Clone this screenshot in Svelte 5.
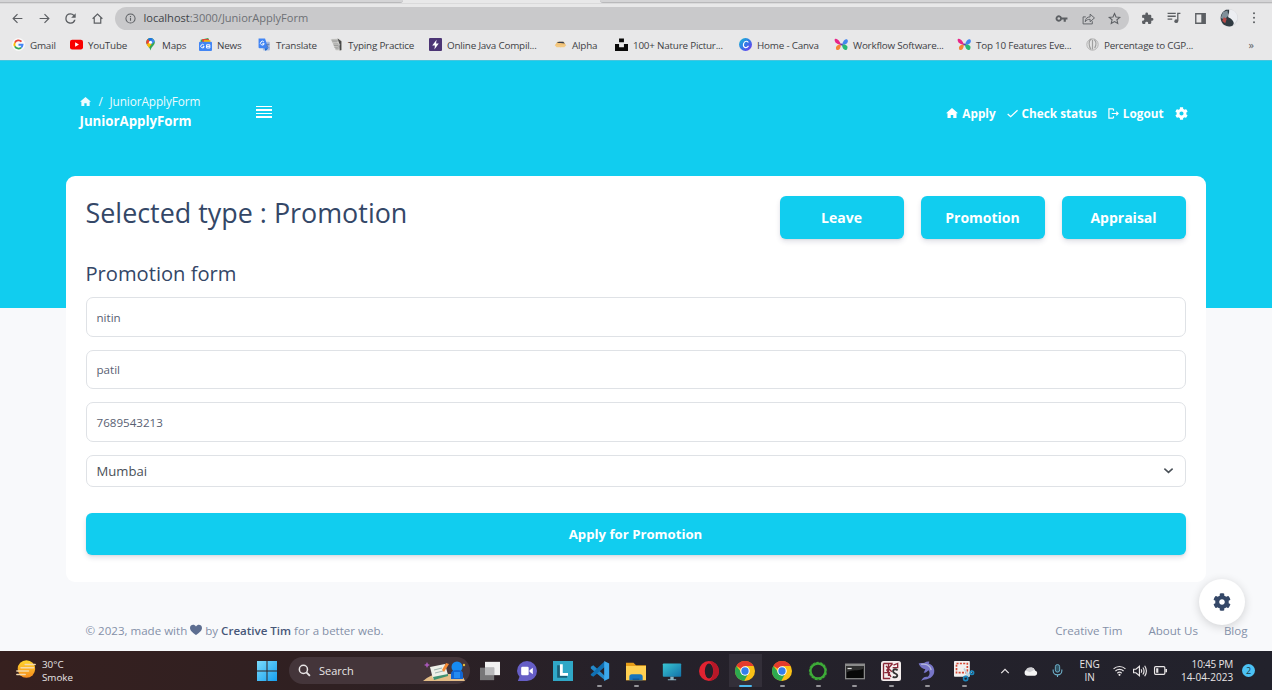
<script lang="ts">
  const bookmarks = [
    { icon: 'google', label: 'Gmail', w: 58 },
    { icon: 'youtube', label: 'YouTube', w: 74 },
    { icon: 'maps', label: 'Maps', w: 55 },
    { icon: 'news', label: 'News', w: 59 },
    { icon: 'translate', label: 'Translate', w: 72 },
    { icon: 'typing', label: 'Typing Practice', w: 99 },
    { icon: 'bolt', label: 'Online Java Compil...', w: 125 },
    { icon: 'alpha', label: 'Alpha', w: 61 },
    { icon: 'unsplash', label: '100+ Nature Pictur...', w: 124 },
    { icon: 'canva', label: 'Home - Canva', w: 96 },
    { icon: 'butterfly', label: 'Workflow Software...', w: 123 },
    { icon: 'butterfly', label: 'Top 10 Features Eve...', w: 128 },
    { icon: 'globe', label: 'Percentage to CGP...', w: 120 }
  ];

  const apps = [
    { icon: 'taskview' }, { icon: 'chat' }, { icon: 'letterL' },
    { icon: 'vscode', open: true }, { icon: 'folder', open: true },
    { icon: 'monitor' }, { icon: 'opera' },
    { icon: 'chrome', open: true, active: true }, { icon: 'chrome', open: true },
    { icon: 'ring', open: true }, { icon: 'terminal', open: true },
    { icon: 'cs', open: true }, { icon: 'dolphin', open: true }, { icon: 'snip', open: true }
  ];

  const types = ['Leave', 'Promotion', 'Appraisal'];
  const selected = 'Promotion';
  const fields = ['nitin', 'patil', '7689543213'];

  const cog = '<path transform="scale(.046875)" fill="currentColor" d="M487.4 315.7l-42.6-24.6c4.3-23.2 4.3-47 0-70.2l42.6-24.6c4.9-2.8 7.1-8.6 5.5-14-11.1-35.6-30-67.8-54.7-94.6-3.8-4.1-10-5.1-14.8-2.3L380.8 110c-17.9-15.4-38.5-27.3-60.8-35.1V25.8c0-5.6-3.9-10.5-9.4-11.7-36.7-8.2-74.3-7.8-109.2 0-5.5 1.2-9.4 6.1-9.4 11.7V75c-22.2 7.9-42.8 19.8-60.8 35.1L88.7 85.5c-4.9-2.8-11-1.9-14.8 2.3-24.7 26.7-43.6 58.9-54.7 94.6-1.7 5.4.6 11.2 5.5 14L67.3 221c-4.3 23.2-4.3 47 0 70.2l-42.6 24.6c-4.9 2.8-7.1 8.6-5.5 14 11.1 35.6 30 67.8 54.7 94.6 3.8 4.1 10 5.1 14.8 2.3l42.6-24.6c17.9 15.4 38.5 27.3 60.8 35.1v49.2c0 5.6 3.9 10.5 9.4 11.7 36.7 8.2 74.3 7.8 109.2 0 5.5-1.2 9.4-6.1 9.4-11.7v-49.2c22.2-7.9 42.8-19.8 60.8-35.1l42.6 24.6c4.9 2.8 11 1.9 14.8-2.3 24.7-26.7 43.6-58.9 54.7-94.6 1.5-5.5-.7-11.3-5.6-14.1zM256 336c-44.1 0-80-35.9-80-80s35.9-80 80-80 80 35.9 80 80-35.9 80-80 80z"/>';

  // All drawings share a 24 x 24 grid.
  const icons: Record<string, string> = {
    cog,
    back: '<path d="M21 12H4M12 4l-8 8 8 8" fill="none" stroke="currentColor" stroke-width="2.2"/>',
    forward: '<path d="M3 12h17M12 4l8 8-8 8" fill="none" stroke="currentColor" stroke-width="2.2"/>',
    reload: '<path d="M17.65 6.35A7.96 7.96 0 0 0 12 4a8 8 0 1 0 7.73 10h-2.08A6 6 0 1 1 12 6c1.66 0 3.14.69 4.22 1.78L13 11h7V4z" fill="currentColor" transform="translate(-2.4 -2.4) scale(1.2)"/>',
    homeOutline: '<path d="M3 12.5L12 4l9 8.500M6 10.500V20.500h12V10.500" fill="none" stroke="currentColor" stroke-width="2.200"/>',
    info: '<circle cx="12" cy="12" r="10" fill="none" stroke="currentColor" stroke-width="2.2"/><path d="M12 11v6M12 6.500v2.500" stroke="currentColor" stroke-width="2.400"/>',
    key: '<path fill="currentColor" fill-rule="evenodd" d="M12.650 10A6 6 0 1 0 12.650 14H16v4h4v-4h3v-4zM7 14.500a2.500 2.500 0 1 1 0-5 2.500 2.500 0 0 1 0 5z"/>',
    share: '<path d="M7 9H2v13h17v-5M6 18c0-6 4-9 9-9V4l8 7-8 7v-4.500c-4 0-7 1-9 4.500z" fill="none" stroke="currentColor" stroke-width="1.700"/>',
    star: '<path d="M12 2.800l2.800 6.300 6.900.7-5.200 4.600 1.500 6.800-6-3.600-6 3.600 1.500-6.800L2.300 9.800l6.900-.7z" fill="none" stroke="currentColor" stroke-width="2"/>',
    puzzle: '<path fill="currentColor" d="M20.500 11H19V7a2 2 0 0 0-2-2h-4V3.500a2.500 2.500 0 0 0-5 0V5H4a2 2 0 0 0-2 2v3.800h1.500a2.700 2.700 0 0 1 0 5.400H2V20c0 1.100.9 2 2 2h3.800v-1.500a2.700 2.700 0 0 1 5.400 0V22H17a2 2 0 0 0 2-2v-4h1.500a2.500 2.500 0 0 0 0-5z"/>',
    queue: '<path d="M1 4h14M1 9h14M1 14h8" stroke="currentColor" stroke-width="2.200"/><path d="M23 4h-4.500v13" fill="none" stroke="currentColor" stroke-width="2.200"/><circle cx="15.800" cy="17.500" r="3.200" fill="currentColor"/>',
    panel: '<path fill="currentColor" fill-rule="evenodd" d="M2 2h20v20H2zM4.500 4.500v15h9v-15z"/>',
    dots: '<g fill="currentColor"><circle cx="12" cy="2.500" r="2"/><circle cx="12" cy="11.500" r="2"/><circle cx="12" cy="20.500" r="2"/></g>',
    avatar: '<circle cx="12" cy="12" r="12" fill="#d8d9dd"/><path d="M8 1a12 12 0 0 0-3 20q7 4 12 1c2-3 2-6 0-8l-6-4c0-4 2-6 1-9z" fill="#303b42"/><path d="M4 4l6-2 1 7-5 5-5-2z" fill="#80909a"/><path d="M5 11l4 2-2 6-4-3z" fill="#b54947"/><path d="M13 1c7 0 11 6 10 13l-4 6q-2-7-8-9z" fill="#eceef2"/>',
    google: '<circle cx="12" cy="12" r="12" fill="#fafafa"/><g fill="none" stroke-width="3.400"><path d="M17.500 6.800A7.500 7.500 0 0 0 5.300 8.600" stroke="#ea4335"/><path d="M5.300 8.600a7.500 7.500 0 0 0 0 6.800" stroke="#fbbc05"/><path d="M5.300 15.400a7.500 7.500 0 0 0 11.500 2.300" stroke="#34a853"/><path d="M16.800 17.700a7.500 7.500 0 0 0 2.700-5.200H12" stroke="#4285f4"/></g>',
    youtube: '<rect y="3" width="24" height="18" rx="4" fill="#f80000"/><path d="M9.500 8v8l7-4z" fill="#fff"/>',
    maps: '<path d="M4 8a8 8 0 0 1 16 0c0 6-6 7-8 15C10 15 4 14 4 8z" fill="#34a853"/><path d="M4 8a8 8 0 0 1 3-6l5 5-6 7-2-6z" fill="#ea4335"/><path d="M7 2a8 8 0 0 1 9-1l-4 6z" fill="#1a73e8"/><path d="M16 1l4 5-6 6-3-4z" fill="#4285f4"/><path d="M5 12l5-4 4 3-5 7z" fill="#fbbc04"/><circle cx="12" cy="8" r="2.800" fill="#fff"/>',
    news: '<path d="M3 3l14-3 4 9H3z" fill="#36a853"/><path d="M6 2h12v8H6z" fill="#ea4335"/><path d="M9 4h12v8H9z" fill="#fbbc04"/><rect y="7" width="24" height="17" rx="2" fill="#4285f4"/><path d="M9 13a3.200 3.200 0 1 0 .6 3H7M14 12.500h6v6h-6zM14 15.500h6" fill="none" stroke="#fff" stroke-width="1.800"/>',
    translate: '<rect x="9" y="7" width="13" height="16" rx="2" fill="#a9bce0"/><path d="M1 1h12l6 18H3a2 2 0 0 1-2-2z" fill="#4285f4"/><path d="M12 19h7l-5 5z" fill="#1967d2"/><path d="M11 7.500a3.500 3.500 0 1 0 .5 3H8" fill="none" stroke="#fff" stroke-width="1.800"/><path d="M15 12h6M18.500 10v2c0 3-2 5-3 6M16 13c1 3 3 4 5 5" fill="none" stroke="#5c79aa" stroke-width="1.300"/>',
    typing: '<path d="M1 2l16-1 5 5v17H11z" fill="#d6d6d3"/><path d="M3 4h12M4 7h10M6 11h9M7 14h8M8 17h7M10 20h6" stroke="#898989" stroke-width="1.500"/><path d="M14 1l7 5v16l-3 1-1-13z" fill="#484848"/><path d="M16 10l3 1-4 9-2 1z" fill="#b0b0b0"/>',
    bolt: '<rect width="24" height="24" rx="2" fill="#4c3575"/><path d="M14 3L6 14h5l-1 7 8-11h-5z" fill="#fff"/>',
    alpha: '<path d="M2 13l4-6h12l4 6-10 4z" fill="#f2c276"/><path d="M5 9l4-2h8l3 3-8-1z" fill="#353c4b"/><path d="M1 13h22l-4 4H5z" fill="#f3c983"/>',
    unsplash: '<path d="M7.500 1h9v7h-9zM0 11h7.500v6h9v-6H24v13H0z" fill="#090909"/>',
    canva: '<defs><linearGradient id="cv" x2="1" y2="1"><stop stop-color="#18bfd0"/><stop offset=".45" stop-color="#2f7fe6"/><stop offset="1" stop-color="#772ff0"/></linearGradient></defs><circle cx="12" cy="12" r="12" fill="url(#cv)"/><path d="M16.500 8.500c1-3-6-4-8 2-2 7 5 10 9 4" fill="none" stroke="#fff" stroke-width="2"/>',
    butterfly: '<path d="M11 12C8 4 3 0 0 2s3 12 11 10z" fill="#e72688"/><path d="M13 12c2-8 7-11 10-9 3 4-3 11-10 9z" fill="#4386ee"/><path d="M11 12C2 12 0 18 3 22c5 1 7-2 8-10z" fill="#f58634"/><path d="M13 12c9-1 12 4 9 9-4 3-9-1-9-9z" fill="#28b875"/><path d="M10 11l4 2" stroke="#6c39a7" stroke-width="3"/>',
    globe: '<circle cx="12" cy="12" r="10.500" fill="#e4e4e4" stroke="#a7a7a7" stroke-width="1.500"/><path d="M10 2c-6 3-5 13-1 19M12 3v18M15 3c5 4 4 10 1 16" fill="none" stroke="#a0a0a0" stroke-width="2.200"/>',
    home: '<path d="M12 2L0 12.500h3V22h6.500v-6h5v6H21v-9.500h3z" fill="currentColor"/>',
    check: '<path d="M1.500 13l6.500 6L23 5" fill="none" stroke="currentColor" stroke-width="2.800"/>',
    logout: '<path d="M12 2H2v20h10M12 2v4M12 18v4M8 12h14M18 8l4 4-4 4" fill="none" stroke="currentColor" stroke-width="2.600"/>',
    heart: '<path d="M12 22C8 19 0 14 0 8c0-6 8-9 12-3 4-6 12-3 12 3 0 6-8 11-12 14z" fill="currentColor"/>',
    caret: '<path d="M3 8l9 8 9-8" fill="none" stroke="currentColor" stroke-width="3.400"/>',
    up: '<path d="M3 17l9-9 9 9" fill="none" stroke="currentColor" stroke-width="3"/>',
    smoke: '<defs><linearGradient id="sun" x2="0" y2="1"><stop stop-color="#ffd72e"/><stop offset="1" stop-color="#f58a1d"/></linearGradient></defs><circle cx="12.500" cy="12" r="10.500" fill="url(#sun)"/><g stroke="#f4d9ab" stroke-width="1.800" stroke-linecap="round"><path d="M11 6.500h12M6 10.500h15M1 14.500h14M1 18.500h10"/></g>',
    windows: '<defs><linearGradient id="win" x2="1" y2="1"><stop stop-color="#7bdbfb"/><stop offset="1" stop-color="#159fef"/></linearGradient></defs><path d="M0 0h11.400v11.400H0zM12.600 0H24v11.400H12.600zM0 12.600h11.400V24H0zM12.600 12.600H24V24H12.600z" fill="url(#win)"/>',
    search: '<circle cx="10" cy="10" r="7.500" fill="none" stroke="currentColor" stroke-width="2.800"/><path d="M15.500 15.500L22 22" stroke="currentColor" stroke-width="3.400"/>',
    taskview: '<path d="M6 1h18v16H6z" fill="#f1f1f1"/><path d="M0 8h17v15H0z" fill="#777678"/><path d="M6 8h11v9H6z" fill="#b9b9bb"/>',
    chat: '<path d="M0 12A12 12 0 1 1 12 24H1l2-5a12 12 0 0 1-3-7z" fill="#665ec6"/><rect x="5" y="7" width="9" height="10" rx="1.500" fill="#fff"/><path d="M15 11l4-3v8l-4-3z" fill="#fff"/>',
    letterL: '<path d="M0 0h24v24H0z" fill="#30a8c7"/><path d="M5 5h4v13h8v2H5z" fill="#176078"/><path d="M10 4v12h8" fill="none" stroke="#fff" stroke-width="3.400"/>',
    vscode: '<path d="M1 7l3-2 14 13v5L1 9z" fill="#2489ca"/><path d="M1 16L17 1l2 5L4 19l-3-2z" fill="#1070b3"/><path d="M17 0l6 3v18l-6 3z" fill="#3ca8eb"/>',
    folder: '<path d="M0 2h9l3 3h12v18H0z" fill="#e69d18"/><path d="M0 6h24v17H0z" fill="#ffd052"/><path d="M4 23v-4q0-3 3-3h10q3 0 3 3v4z" fill="#1974bd"/><path d="M8 23v-2h8v2z" fill="#135999"/>',
    monitor: '<defs><linearGradient id="mon" x2="1" y2="1"><stop stop-color="#39c5d2"/><stop offset="1" stop-color="#1271a9"/></linearGradient></defs><rect x="1" y="3" width="22" height="16" rx="1" fill="url(#mon)"/><path d="M10 19h4v3h3v1H7v-1h3z" fill="#8db4c4"/>',
    opera: '<circle cx="12" cy="12" r="12" fill="#e22331"/><path d="M12 0a12 12 0 0 1 0 24c7-4 7-20 0-24z" fill="#b81828"/><ellipse cx="12" cy="12" rx="5" ry="9" fill="#24212a"/>',
    chrome: '<circle cx="12" cy="12" r="12" fill="#fbc116"/><path d="M12 12L1.600 6A12 12 0 0 1 22.400 6H12z" fill="#e33b2e"/><path d="M1.600 6A12 12 0 0 0 11 24l5-9-8-1z" fill="#2da94f"/><path d="M12 6.500h10.400L16 15z" fill="#fbc116"/><circle cx="12" cy="12" r="5.700" fill="#fff"/><circle cx="12" cy="12" r="4.400" fill="#347eea"/>',
    ring: '<circle cx="12" cy="12" r="9.300" fill="none" stroke="#3eac38" stroke-width="3.400"/><circle cx="12" cy="12" r="10.500" fill="none" stroke="#27302a" stroke-width="1" stroke-dasharray="2 3"/>',
    terminal: '<path d="M0 3h24v19H0z" fill="#8b8b8b"/><path d="M1.500 6h21v14.500h-21z" fill="#080808"/><path d="M1.500 14c8-5 13-1 21-5V6h-21z" fill="#303030"/><path d="M3 9h5" stroke="#ddd" stroke-width="1.500"/>',
    cs: '<rect width="24" height="24" rx="3" fill="#f4eeee"/><path d="M3 3h11M3 3v18h8M6 6l7 7M14 3l-7 8 5 8M4 14h7M9 4v14M15 5l5-2v5h-6" fill="none" stroke="#8b2938" stroke-width="1.600"/><path d="M20 11c-5-3-8 2-3 4 5 2 2 6-3 4" fill="none" stroke="#333" stroke-width="2.200"/>',
    dolphin: '<path d="M2 3c3-1 5 0 7-1 2-1 4-2 6-1l-1 2c6 2 8 8 6 13-2 4-5 5-8 6-3 0-5 1-7 2 1-3 4-6 8-5 2-2 3-5 1-8-2 1-3 4-6 3l2-4c-3-1-6-2-8-7z" fill="#7775c7"/><path d="M5 4c5-1 11 1 12 7" fill="none" stroke="#b5badd" stroke-width="1.500"/>',
    snip: '<rect width="19" height="19" rx="1" fill="#f1f0ef"/><path d="M3 3h13v11H3z" fill="none" stroke="#d74936" stroke-width="2" stroke-dasharray="2.500 1.500"/><path d="M12 9l6 10M22 12l-9 7" stroke="#c0d4df" stroke-width="2"/><g fill="none" stroke="#1b87bd" stroke-width="2"><circle cx="14" cy="21" r="2.500"/><circle cx="21.500" cy="14" r="2"/></g>',
    cloud: '<path d="M6 20a5 5 0 0 1 0-10 7 7 0 0 1 13 1 4.600 4.600 0 0 1 0 9z" fill="#f4f4f4"/><path d="M3 11q2-6 8-5 5-1 7 4l-8 4z" fill="#cfcfd3"/>',
    mic: '<rect x="8" y="1" width="8" height="14" rx="4" fill="#315463" stroke="#70b4ce" stroke-width="1.700"/><path d="M4 10v3a8 7 0 0 0 16 0v-3M12 20v4" fill="none" stroke="#70b4ce" stroke-width="2"/>',
    wifi: '<g fill="none" stroke="currentColor" stroke-width="2.200"><path d="M1 9a16 16 0 0 1 22 0M4.500 13a11 11 0 0 1 15 0M8 17a6 6 0 0 1 8 0"/></g><circle cx="12" cy="20" r="2" fill="currentColor"/>',
    sound: '<path d="M1 9h4l6-5v16l-6-5H1zM14 9q2 3 0 6M17 6q4 6 0 12M20 3q6 9 0 18" fill="none" stroke="currentColor" stroke-width="2"/>',
    battery: '<rect x="1" y="5" width="19" height="14" rx="2" fill="none" stroke="currentColor" stroke-width="2.200"/><path d="M4 8h4v8H4zM21 9h3v6h-3z" fill="currentColor"/>'
  };
</script>

{#snippet icon(name: string, size: number)}
  <svg class="icon" viewBox="0 0 24 24" width={size} height={size} aria-hidden="true">{@html icons[name]}</svg>
{/snippet}

<div class="screen">
  <header class="browser">
    <div class="tabs"><i class="tab first"></i><i class="tab second"></i></div>
    <div class="toolbar">
      <div class="nav">
        {@render icon('back', 13)}
        {@render icon('forward', 13)}
        {@render icon('reload', 13)}
        {@render icon('homeOutline', 13)}
      </div>
      <div class="omnibox">
        {@render icon('info', 11)}
        <span class="url"><b>localhost</b>:3000/JuniorApplyForm</span>
        <div class="page-actions">
          {@render icon('key', 13)}
          {@render icon('share', 13)}
          {@render icon('star', 13)}
        </div>
      </div>
      <div class="extensions">
        {@render icon('puzzle', 13)}
        {@render icon('queue', 14)}
        {@render icon('panel', 13)}
        {@render icon('avatar', 18)}
        {@render icon('dots', 12)}
      </div>
    </div>
    <nav class="bookmarks">
      {#each bookmarks as item}
        <span class="bookmark" style="width: {item.w}px">{@render icon(item.icon, 13)}<span>{item.label}</span></span>
      {/each}
      <span class="more">»</span>
    </nav>
  </header>

  <main>
    <div class="topbar">
      <div class="crumbs">
        <div class="trail">{@render icon('home', 11)}<span class="slash">/</span><span>JuniorApplyForm</span></div>
        <h6>JuniorApplyForm</h6>
      </div>
      <div class="burger"><i></i><i></i><i></i><i></i></div>
      <nav class="account">
        <span>{@render icon('home', 12)}<span>Apply</span></span>
        <span>{@render icon('check', 11)}<span>Check status</span></span>
        <span>{@render icon('logout', 11)}<span>Logout</span></span>
        {@render icon('cog', 13)}
      </nav>
    </div>

    <section class="card">
      <div class="card-head">
        <h2>Selected type : {selected}</h2>
        <div class="types">
          {#each types as type}<button>{type}</button>{/each}
        </div>
      </div>
      <h4>Promotion form</h4>
      <form>
        {#each fields as value}<div class="field">{value}</div>{/each}
        <div class="field select"><span>Mumbai</span>{@render icon('caret', 11)}</div>
        <button class="submit" type="button">Apply for Promotion</button>
      </form>
    </section>

    <footer>
      <div class="credit">© 2023, made with {@render icon('heart', 12)} by <b>Creative Tim</b> for a better web.</div>
      <div class="links"><span>Creative Tim</span><span>About Us</span><span>Blog</span></div>
    </footer>
    <div class="fab">{@render icon('cog', 18)}</div>
  </main>

  <div class="taskbar">
    <div class="weather">{@render icon('smoke', 20)}<div><div>30°C</div><div>Smoke</div></div></div>
    <div class="start">{@render icon('windows', 20)}</div>
    <div class="search">
      {@render icon('search', 13)}<span>Search</span>
      <svg class="desk" viewBox="0 0 44 20" width="44" height="20" aria-hidden="true">
        <path d="M1 20q8-7 16-7h18q6 1 8 7z" fill="#e4bd86" />
        <path d="M8 6l15-3 3 11-15 4z" fill="#edf0e8" />
        <path d="M11 16l15-3v2l-14 4z" fill="#3f9270" />
        <path d="M12 9l8-2M13 12l8-2" stroke="#9db3ad" />
        <path d="M20 9l4-7 3 1-5 8z" fill="#f38a35" />
        <path d="M5 1l1 2 2 1-2 1-1 2-1-2-2-1 2-1z" fill="#a657b6" />
        <circle cx="35" cy="6" r="5.500" fill="#168bf0" />
        <path d="M29 13q0-4 6-4t6 4v5H29z" fill="#1266d3" />
        <path d="M32 11h6v6h-6z" fill="#258bf1" />
        <circle cx="42" cy="4" r="1.200" fill="#e6bd38" />
      </svg>
    </div>
    <div class="apps">
      {#each apps as app}
        <span class="app" class:active={app.active} class:open={app.open}>{@render icon(app.icon, 20)}</span>
      {/each}
    </div>
    <div class="tray">
      <span class="cell chev">{@render icon('up', 10)}</span>
      <span class="cell cl">{@render icon('cloud', 14)}</span>
      <span class="cell mi">{@render icon('mic', 13)}</span>
      <span class="cell lang"><span>ENG</span><span>IN</span></span>
      <span class="cell st">{@render icon('wifi', 13)}{@render icon('sound', 14)}{@render icon('battery', 13)}</span>
      <span class="clock"><span>10:45 PM</span><span class="date">14-04-2023</span></span>
      <span class="count">2</span>
    </div>
  </div>
</div>

<style>
  :global(body) { margin: 0; overflow: hidden; }
  * { box-sizing: border-box; }
  .screen { display: flex; flex-direction: column; width: 1272px; height: 690px; font-family: "Open Sans", sans-serif; white-space: nowrap; }
  .icon { display: block; flex: none; overflow: visible; }

  .browser { height: 60px; background: #e8e8e9; color: #5c5f63; }
  .tabs { display: flex; height: 4px; border-bottom: 1px solid #dadadb; }
  .tab { height: 3px; background: #d4d4d6; border-bottom: 1px solid #b9b9bb; }
  .first { width: 403px; border-radius: 0 0 6px 0; }
  .second { flex: 1; margin-left: 197px; border-radius: 0 0 0 6px; }
  .toolbar { display: flex; align-items: center; height: 28px; }
  .nav { display: flex; align-items: center; gap: 13.500px; width: 115px; padding-left: 11px; }
  .omnibox { display: flex; align-items: center; width: 1014px; height: 23px; border-radius: 12px; padding: 0 8px 0 10px; background: #c9c9cb; }
  .url { margin: -1px 0 0 7.500px; font-size: 11.1px; letter-spacing: -0.03px; color: #6d7075; }
  .url b { font-weight: 400; color: #404348; }
  .page-actions { display: flex; gap: 13.500px; margin-left: auto; }
  .extensions { display: flex; align-items: center; gap: 13px; padding-left: 12px; }
  .extensions .icon:last-child { margin-left: -3px; }
  .bookmarks { display: flex; align-items: center; height: 25px; padding-left: 11.500px; }
  .bookmark { display: flex; align-items: center; gap: 5.500px; flex: none; font-size: 9.85px; letter-spacing: -0.2px; color: #3d4045; }
  .more { margin-left: 43px; font-size: 11px; }

  main { position: relative; height: 591px; padding: 0 66.500px 0 65.500px; background: linear-gradient(#11cdef 247.500px, #f8f9fb 247.500px); color: #344767; border-top: 1px solid #45c5de; }
  .topbar { display: flex; height: 114.500px; padding: 32px 18px 0 14px; color: #fff; }
  .crumbs { width: 176px; }
  .trail { display: flex; align-items: center; height: 18px; margin-top: -1px; font-size: 11.8px; letter-spacing: -0.1px; color: #ecfbfe; }
  .slash { width: 19px; padding-left: 8px; }
  h6 { margin: 1px 0 0; font-size: 13.25px; font-weight: 700; line-height: 20px; }
  .burger { display: flex; flex-direction: column; gap: 2px; padding-top: 12.500px; }
  .burger i { width: 16px; height: 1.500px; background: #fff; }
  .account { display: flex; align-items: center; gap: 11px; height: 40px; margin-left: auto; font-size: 11.75px; font-weight: 700; }
  .account > span { display: flex; align-items: center; gap: 4px; }

  .card { height: 406px; padding: 20px; border-radius: 9px; background: #fff; }
  .card-head { display: flex; justify-content: space-between; height: 67px; }
  h2 { margin: 0; font-size: 26.9px; font-weight: 400; line-height: 33px; }
  .types { display: flex; gap: 17px; }
  button { border: 0; padding: 0; width: 124px; height: 43px; border-radius: 6px; background: #11cdef; color: #fff; font: 700 14px "Open Sans", sans-serif; box-shadow: 0 3px 5px rgba(50, 50, 93, .13), 0 1px 2px rgba(0, 0, 0, .06); }
  h4 { margin: 0; font-size: 20.15px; font-weight: 400; line-height: 20px; }
  form { display: flex; flex-direction: column; gap: 13px; padding-top: 14.500px; }
  .field { display: flex; align-items: center; height: 39.500px; padding: 1px 10px 0; border: 1px solid #dfe2e6; border-radius: 7px; color: #596173; font-size: 11.6px; }
  .select { justify-content: space-between; height: 32px; padding-top: 0; font-size: 13.1px; color: #495057; padding-right: 11px; }
  form .submit { width: 100%; height: 42px; margin-top: 13px; font-size: 13.2px; }

  footer { display: flex; justify-content: space-between; padding: 39px 0 0 20px; margin-right: -42px; font-size: 11.55px; line-height: 20px; color: #8490a8; }
  .credit .icon { display: inline-block; vertical-align: -1px; color: #5d6e91; }
  .credit b { font-weight: 600; color: #475778; }
  .links { display: flex; gap: 26px; }
  .fab { position: absolute; left: 1199px; top: 517.500px; display: grid; place-items: center; width: 46px; height: 46px; border-radius: 50%; background: #fff; box-shadow: 0 2px 10px rgba(0, 0, 0, .16); }
  .links { position: relative; z-index: 1; }

  .taskbar { display: flex; align-items: center; height: 39px; background: linear-gradient(90deg, #36201f 0, #2f2022 340px, #25212a 640px, #22222c); color: #e8e5e6; }
  .weather { display: flex; gap: 6px; width: 257px; padding-left: 16px; font-size: 9.8px; line-height: 13px; align-items: center; }
  .weather .icon { margin-top: -3px; }
  .start { width: 32px; }
  .search { display: flex; align-items: center; width: 181px; height: 27px; border-radius: 14px; padding-left: 9px; background: #44353a; font-size: 11px; }
  .search span { margin-left: 8px; }
  .desk { margin-left: auto; margin-right: 4px; }
  .apps { display: flex; padding-left: 2px; }
  .app { position: relative; display: grid; place-items: center; width: 36.450px; height: 39px; }
  .active { background: linear-gradient(#332f39, #332f39) center / 33px 33px no-repeat; }
  .open::after { content: ""; position: absolute; left: 16px; bottom: 3px; width: 5px; height: 2.500px; border-radius: 2px; background: #96959a; }
  .active::after { left: 12px; width: 13px; background: #4cb9ed; }
  .tray { display: flex; align-items: center; flex: 1; padding-left: 9px; }
  .cell { display: flex; flex: none; justify-content: center; }
  .chev { width: 27px; }
  .cl { width: 26px; }
  .mi { width: 26px; }
  .lang { flex-direction: column; align-items: center; width: 39px; font-size: 10px; line-height: 13px; }
  .st { gap: 7px; width: 62px; }
  .clock { display: flex; flex-direction: column; align-items: flex-end; width: 62px; font-size: 10px; line-height: 13px; letter-spacing: -0.2px; }
  .date { letter-spacing: 0; }
  .count { display: grid; place-items: center; width: 13px; height: 13px; margin-left: 9px; border-radius: 50%; background: #4cc2f4; color: #173744; font-size: 9px; line-height: 13px; }
</style>
